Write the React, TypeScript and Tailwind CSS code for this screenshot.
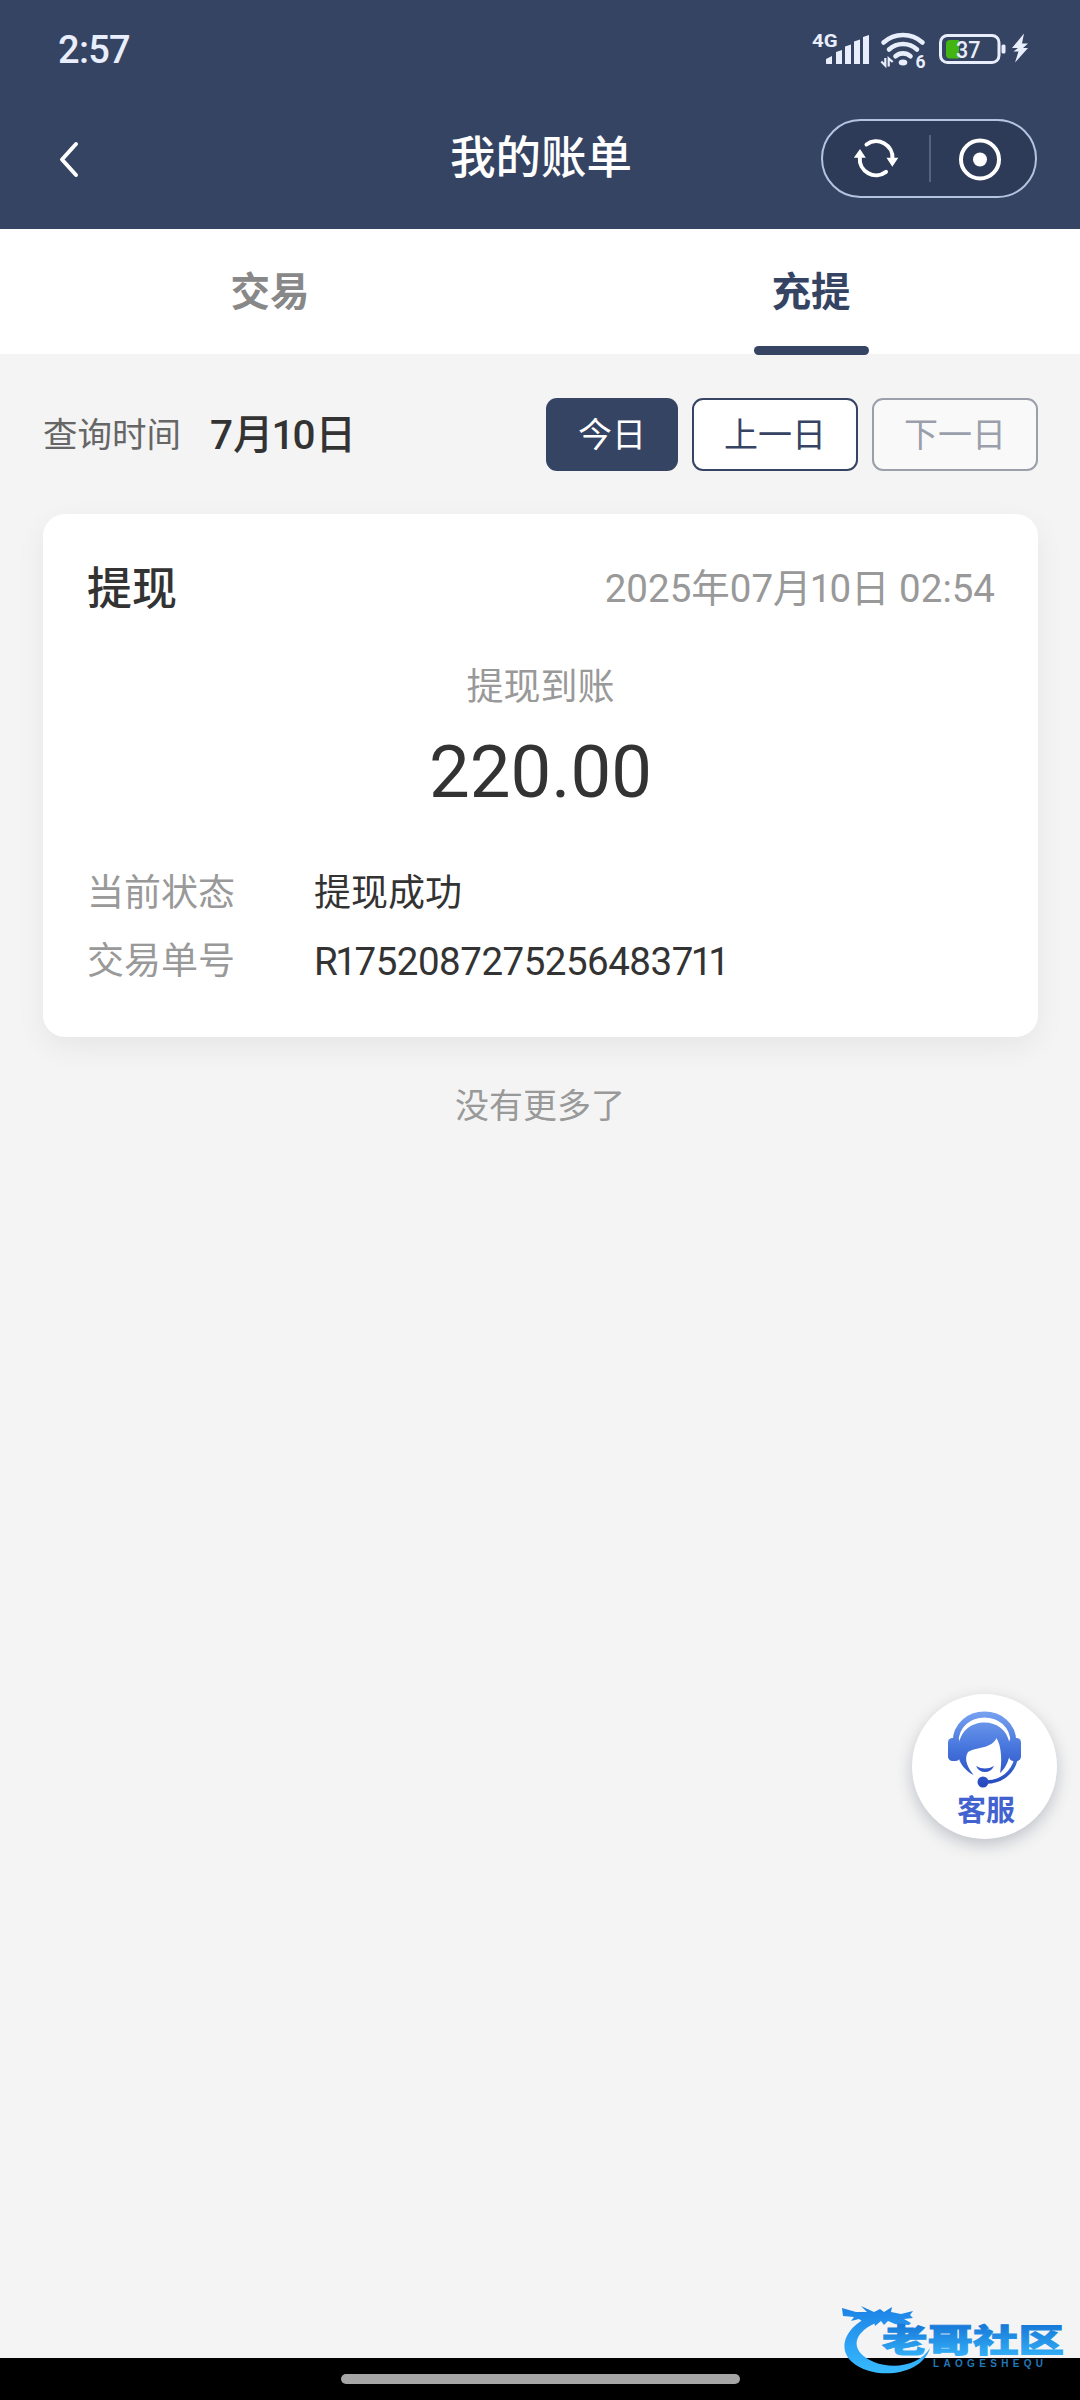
import React from 'react';

/** Digits with a narrow "1", as in proportional-figure UI faces. */
function Num({ children }: { children: string }) {
  return (
    <>
      {children.split('').map((c, i) =>
        c === '1' ? (
          <span key={i} className="-ml-[0.05em] -mr-[0.05em]">
            {c}
          </span>
        ) : (
          c
        ),
      )}
    </>
  );
}

function StatusIcons() {
  return (
    <svg width="230" height="50" viewBox="0 0 230 50" fill="#e9eefc" className="relative top-[3px] overflow-visible">
      <text x="1" y="19" fontSize="18.500" fontWeight="700" fontFamily="Roboto, sans-serif" textLength="25.500" lengthAdjust="spacingAndGlyphs">4G</text>
      <path d="M15 35.500V31l6-3v8h-4q-2 0-2-.500zM25 24l6-2v14h-6zM34 18.500l6-2v19.500h-6zM43 13.500l6-2v24.500h-6zM52 9l6-2v29h-6z" />
      <g fill="none" stroke="#e9eefc" strokeLinecap="round" strokeWidth="4.600">
        <path d="M72.500 14.500a29 29 0 0 1 39 0" />
        <path d="M78 21.500a20.500 20.500 0 0 1 28 0" />
        <path d="M84.500 28.200a11.500 11.500 0 0 1 15 0" />
      </g>
      <ellipse cx="92" cy="34.500" rx="4.300" ry="3" />
      <path d="M74.300 30v7.500l-4-4M77.700 38.500v-8l4 3.500" fill="none" stroke="#e9eefc" strokeWidth="2.200" />
      <text x="104.500" y="39.500" fontSize="17.500" fontWeight="700" fontFamily="Roboto, sans-serif">6</text>
      <rect x="129.500" y="7.500" width="58.500" height="27" rx="7" fill="none" stroke="#e9eefc" strokeWidth="3" />
      <path d="M139 12h9v18.500h-9q-4 0-4-4V16q0-4 4-4z" fill="#43b512" />
      <text x="145" y="29.500" fontSize="23" fontWeight="500" fontFamily="Roboto, sans-serif" textLength="24.500" lengthAdjust="spacingAndGlyphs">37</text>
      <rect x="190.500" y="16.500" width="4" height="9" rx="1.500" />
      <path d="M213 5.500l-12 14.500h6l-4.500 3.500h5l-3.500 11 13-14.500h-5l5-4.500h-6z" />
    </svg>
  );
}

function RefreshIcon() {
  return (
    <svg width="46" height="42" viewBox="0 0 46 42" fill="none">
      <path d="M13.500 6.500A16.300 16.300 0 0 1 39.500 20.500" stroke="#fff" strokeWidth="4" strokeLinecap="round" />
      <path d="M33 33.800A16.300 16.300 0 0 1 6.800 19.500" stroke="#fff" strokeWidth="4" strokeLinecap="round" />
      <path d="M33.500 19.700h11.800l-6 9zM.800 19.700h12L7 11z" fill="#fff" />
    </svg>
  );
}

function AgentIcon() {
  return (
    <svg width="76" height="78" viewBox="0 0 76 78">
      <defs>
        <linearGradient id="agent" gradientUnits="userSpaceOnUse" x1="0" y1="0" x2="0" y2="76">
          <stop offset="0" stopColor="#78a2f0" />
          <stop offset="0.500" stopColor="#4574dc" />
          <stop offset="1" stopColor="#2548bd" />
        </linearGradient>
      </defs>
      <path d="M8.500 31C9 14 22 3.500 37.500 3.500S66 14 66.500 31" fill="none" stroke="url(#agent)" strokeWidth="6" />
      <rect x="1" y="27" width="12" height="23" rx="4.500" fill="url(#agent)" />
      <rect x="62" y="27" width="12" height="23" rx="4.500" fill="url(#agent)" />
      <path
        fill="url(#agent)"
        d="M12 48V33C14 19 25 11.500 37.500 11.500S60 19 62.500 32v13c-2 8-5 13-9.500 17 2-10 2-26-3.500-35-5 11-21 9-28.500 14-5 8 1 17 5.500 23C19 60 14 54 12 48z"
      />
      <path d="M69 48C66 61 55 71 39 71" fill="none" stroke="url(#agent)" strokeWidth="3.500" />
      <circle cx="36" cy="71" r="5.500" fill="url(#agent)" />
      <path d="M29 55q9 5 18 0-3 6-9 6t-9-6z" fill="#2f56c9" />
    </svg>
  );
}

function Watermark() {
  return (
    <svg width="230" height="80" viewBox="0 0 230 80" className="absolute left-[838px] top-[2300px]">
      <defs>
        <linearGradient id="wm" gradientUnits="userSpaceOnUse" x1="0" y1="8" x2="0" y2="74">
          <stop offset="0" stopColor="#1d83e6" />
          <stop offset="1" stopColor="#38bbff" />
        </linearGradient>
        <linearGradient id="wmText" x1="0" y1="0" x2="0" y2="1">
          <stop offset="0.200" stopColor="#1778d8" />
          <stop offset="1" stopColor="#38b8fb" />
        </linearGradient>
      </defs>
      <path
        fill="url(#wm)"
        d="M38 14C8 24-2 48 14 62c22 19 70 14 78-14C82 65 56 70 36 62 11 52 14 33 38 23z"
      />
      <path
        fill="url(#wm)"
        d="M4 8l14 4 11 0-6-6 13 6 6-3 4 3 8-5-1 5 10 2 12-3-3 4 3 3-9 1 7 4-2 2-14-1-7-3-4 4-3-4-6 5-1-4-8 2-7-5-8 2 3-4-11-1z"
      />
      <text x="44" y="53" fontSize="35" fontWeight="900" fill="url(#wmText)" stroke="url(#wmText)" strokeWidth="1" fontFamily="'Noto Sans CJK SC', sans-serif" textLength="182" lengthAdjust="spacingAndGlyphs" transform="translate(0 4) scale(1 .91)">老哥社区</text>
      <text x="95" y="67" fontSize="10" fill="#2277b8" fontFamily="'Liberation Sans', sans-serif" fontWeight="700" textLength="110">LAOGESHEQU</text>
    </svg>
  );
}

export default function App() {
  return (
    <div className="relative flex h-[2400px] w-[1080px] flex-col overflow-hidden bg-[#f4f4f4] font-[Roboto,'Noto_Sans_CJK_SC',sans-serif] text-[#333]">
      <header className="flex h-[229px] flex-col bg-[#364463] text-white">
        <div className="flex h-[100px] items-center justify-between pl-[58px] pr-[39px]">
          <span className="text-[38px] font-medium tracking-[-0.7px] text-[#e9eefc]">2:57</span>
          <StatusIcons />
        </div>
        <div className="grid h-[117px] grid-cols-[1fr_auto_1fr] items-center px-[43px]">
          <svg width="24" height="38" viewBox="0 0 24 38" fill="none" className="ml-[14px]">
            <path d="M19 4L5 19.500 19 35" stroke="#fff" strokeWidth="4" strokeLinecap="round" strokeLinejoin="round" />
          </svg>
          <h1 className="pl-[2px] text-[45.5px] font-medium leading-none">我的账单</h1>
          <div className="flex h-[79px] w-[216px] items-center justify-self-end rounded-full border-2 border-[#b4c3e0] bg-[#2e3b58]">
            <div className="flex w-[106px] justify-center">
              <RefreshIcon />
            </div>
            <div className="h-[47px] w-[2px] bg-[#56637f]" />
            <div className="flex flex-1 justify-center pr-[6px]">
              <svg width="44" height="44" viewBox="0 0 44 44">
                <circle cx="22" cy="22.500" r="19" fill="none" stroke="#fff" strokeWidth="4" />
                <circle cx="22" cy="22.500" r="7" fill="#fff" />
              </svg>
            </div>
          </div>
        </div>
      </header>

      <nav className="grid h-[125px] grid-cols-2 bg-white text-center text-[39.5px] font-bold leading-[127px]">
        <div className="text-[#888]">交易</div>
        <div className="relative pl-[2px] text-[#364463]">
          充提
          <span className="absolute left-[214px] top-[117px] h-[9px] w-[115px] rounded-full bg-[#364463]" />
        </div>
      </nav>

      <section className="mt-[44px] flex h-[73px] items-center pl-[43px] pr-[42px]">
        <span className="pt-[2px] text-[34.5px] text-[#666]">查询时间</span>
        <span className="ml-[29px] pt-[2px] text-[40.5px] font-medium">
          <Num>7月10日</Num>
        </span>
        <div className="ml-auto flex gap-[14px] text-[34px]">
          <button className="h-[73px] w-[132px] rounded-[11px] bg-[#364463] pt-[2px] text-white">今日</button>
          <button className="h-[73px] w-[166px] rounded-[11px] border-2 border-[#364463] bg-white pt-[2px] text-[#364463]">上一日</button>
          <button className="h-[73px] w-[166px] rounded-[11px] border-2 border-[#9a9fab] bg-[#f9f9f9] pt-[2px] text-[#9a9fab]">下一日</button>
        </div>
      </section>

      <main className="mx-[43px] mt-[43px] h-[523px] w-[995px] rounded-[22px] bg-white px-[44px] pt-[41px] shadow-[0_10px_30px_rgba(0,0,0,0.06)]">
        <div className="flex h-[68px] items-center justify-between">
          <h2 className="pt-[2px] text-[45px] font-medium">提现</h2>
          <time className="-mr-px text-[38.5px] text-[#999]">
            <Num>2025年07月10日 02:54</Num>
          </time>
        </div>
        <p className="mt-[35px] text-center text-[37px] leading-[60px] text-[#999]">提现到账</p>
        <p className="mt-[15px] text-center text-[72.5px] leading-[80px]">220.00</p>
        <dl className="mt-[47px] grid grid-cols-[227px_1fr] text-[37px] leading-[68px]">
          <dt className="text-[#999]">当前状态</dt>
          <dd>提现成功</dd>
          <dt className="text-[#999]">交易单号</dt>
          <dd className="text-[38.5px] tracking-[-0.5px]">
            <Num>R1752087275256483711</Num>
          </dd>
        </dl>
      </main>

      <p className="mt-[44px] text-center text-[34px] leading-[50px] text-[#999]">没有更多了</p>

      <footer className="mt-auto flex h-[42px] justify-center bg-black pt-[16px]">
        <div className="h-[10px] w-[399px] rounded-full bg-[#a6a6a6]" />
      </footer>

      <aside className="absolute left-[912px] top-[1694px] flex h-[145px] w-[145px] flex-col items-center rounded-full bg-white pt-[17px] shadow-[0_6px_16px_rgba(40,50,80,0.25)]">
        <AgentIcon />
        <span className="ml-[3px] mt-[6px] text-[29px] font-bold leading-[32px] text-[#4263cf]">客服</span>
      </aside>
      <Watermark />
    </div>
  );
}
